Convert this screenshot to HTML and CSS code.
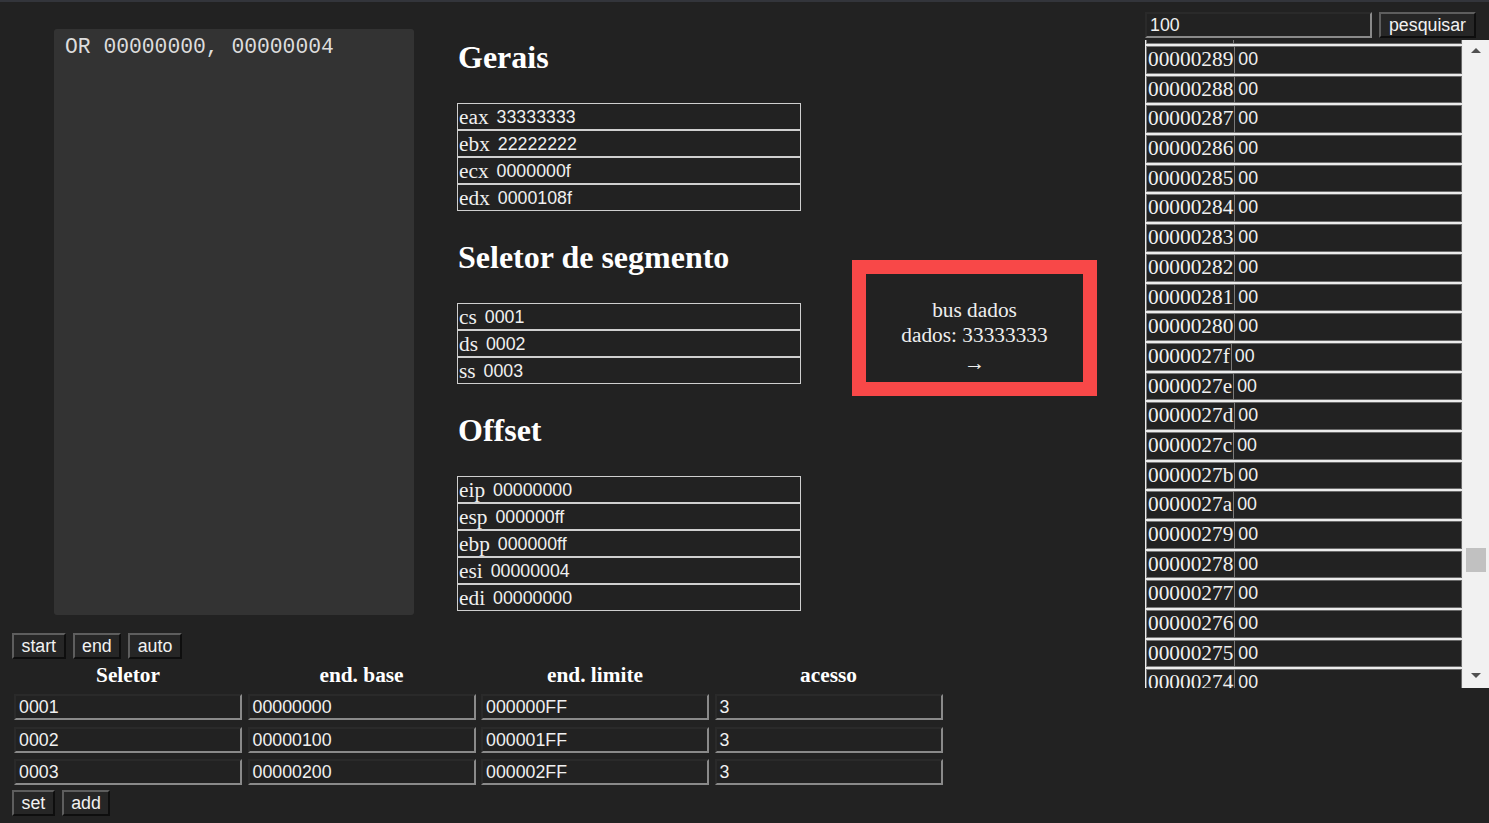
FILE: index.html
```html
<!DOCTYPE html>
<html lang="pt">
<head>
<meta charset="utf-8">
<title>Simulador</title>
<link rel="stylesheet" href="styles.css">
</head>
<body>
<div class="page">
  <div class="left">
    <div class="top">
      <div class="code">OR 00000000, 00000004</div>
      <div class="regs">
        <h2>Gerais</h2>
        <div class="regtable">
          <div class="reg"><span class="rl">eax</span><span class="rv">33333333</span></div>
          <div class="reg"><span class="rl">ebx</span><span class="rv">22222222</span></div>
          <div class="reg"><span class="rl">ecx</span><span class="rv">0000000f</span></div>
          <div class="reg"><span class="rl">edx</span><span class="rv">0000108f</span></div>
        </div>
        <h2>Seletor de segmento</h2>
        <div class="regtable">
          <div class="reg"><span class="rl">cs</span><span class="rv">0001</span></div>
          <div class="reg"><span class="rl">ds</span><span class="rv">0002</span></div>
          <div class="reg"><span class="rl">ss</span><span class="rv">0003</span></div>
        </div>
        <h2>Offset</h2>
        <div class="regtable">
          <div class="reg"><span class="rl">eip</span><span class="rv">00000000</span></div>
          <div class="reg"><span class="rl">esp</span><span class="rv">000000ff</span></div>
          <div class="reg"><span class="rl">ebp</span><span class="rv">000000ff</span></div>
          <div class="reg"><span class="rl">esi</span><span class="rv">00000004</span></div>
          <div class="reg"><span class="rl">edi</span><span class="rv">00000000</span></div>
        </div>
      </div>
      <div class="bus">
        <div>bus dados</div>
        <div>dados: 33333333</div>
        <div class="busarrow">→</div>
      </div>
    </div>
    <div class="controls">
      <div class="btnrow">
        <button class="btn">start</button>
        <button class="btn">end</button>
        <button class="btn">auto</button>
      </div>
      <div class="seg">
        <div class="th">Seletor</div>
        <div class="th">end. base</div>
        <div class="th">end. limite</div>
        <div class="th">acesso</div>
        <div class="inp">0001</div>
        <div class="inp">00000000</div>
        <div class="inp">000000FF</div>
        <div class="inp">3</div>
        <div class="inp">0002</div>
        <div class="inp">00000100</div>
        <div class="inp">000001FF</div>
        <div class="inp">3</div>
        <div class="inp">0003</div>
        <div class="inp">00000200</div>
        <div class="inp">000002FF</div>
        <div class="inp">3</div>
      </div>
      <div class="btnrow btnrow-bottom">
        <button class="btn">set</button>
        <button class="btn">add</button>
      </div>
    </div>
  </div>
  <div class="right">
    <div class="search">
      <div class="sinput">100</div>
      <button class="btn sbtn">pesquisar</button>
    </div>
    <div class="memory">
      <div class="memview">
        <div class="memlist">
          <div class="mrow"><span class="ma">0000028a</span><span class="mv">00</span></div>
          <div class="mrow"><span class="ma">00000289</span><span class="mv">00</span></div>
          <div class="mrow"><span class="ma">00000288</span><span class="mv">00</span></div>
          <div class="mrow"><span class="ma">00000287</span><span class="mv">00</span></div>
          <div class="mrow"><span class="ma">00000286</span><span class="mv">00</span></div>
          <div class="mrow"><span class="ma">00000285</span><span class="mv">00</span></div>
          <div class="mrow"><span class="ma">00000284</span><span class="mv">00</span></div>
          <div class="mrow"><span class="ma">00000283</span><span class="mv">00</span></div>
          <div class="mrow"><span class="ma">00000282</span><span class="mv">00</span></div>
          <div class="mrow"><span class="ma">00000281</span><span class="mv">00</span></div>
          <div class="mrow"><span class="ma">00000280</span><span class="mv">00</span></div>
          <div class="mrow"><span class="ma">0000027f</span><span class="mv">00</span></div>
          <div class="mrow"><span class="ma">0000027e</span><span class="mv">00</span></div>
          <div class="mrow"><span class="ma">0000027d</span><span class="mv">00</span></div>
          <div class="mrow"><span class="ma">0000027c</span><span class="mv">00</span></div>
          <div class="mrow"><span class="ma">0000027b</span><span class="mv">00</span></div>
          <div class="mrow"><span class="ma">0000027a</span><span class="mv">00</span></div>
          <div class="mrow"><span class="ma">00000279</span><span class="mv">00</span></div>
          <div class="mrow"><span class="ma">00000278</span><span class="mv">00</span></div>
          <div class="mrow"><span class="ma">00000277</span><span class="mv">00</span></div>
          <div class="mrow"><span class="ma">00000276</span><span class="mv">00</span></div>
          <div class="mrow"><span class="ma">00000275</span><span class="mv">00</span></div>
          <div class="mrow"><span class="ma">00000274</span><span class="mv">00</span></div>
          <div class="mrow"><span class="ma">00000273</span><span class="mv">00</span></div>
        </div>
      </div>
      <div class="scrollbar">
        <svg class="arrow" width="26" height="22" viewBox="0 0 26 22"><polygon points="8,13 18,13 13,8" fill="#505050"/></svg>
        <div class="track"><div class="thumb"></div></div>
        <svg class="arrow" width="26" height="22" viewBox="0 0 26 22"><polygon points="8,7 18,7 13,12" fill="#505050"/></svg>
      </div>
    </div>
  </div>
</div>
</body>
</html>
```
FILE: styles.css
```css
* { box-sizing: border-box; }
html, body {
  margin: 0;
  padding: 0;
  background: #222222;
}
body {
  width: 1489px;
  height: 823px;
  overflow: hidden;
  border-top: 2px solid #33353b;
  color: #eeeeee;
  font-family: "Liberation Serif", "Times New Roman", serif;
  font-size: 21.33px;
}
.page {
  display: flex;
  height: 821px;
}
.left {
  width: 1145px;
  display: flex;
  flex-direction: column;
}
.top {
  display: flex;
  align-items: flex-start;
}
.code {
  margin-left: 54px;
  margin-top: 27px;
  width: 360px;
  height: 586px;
  background: #333333;
  border-radius: 3px;
  padding: 6px 11px;
  font-family: "Liberation Mono", "Courier New", monospace;
  font-size: 21.33px;
  line-height: 24px;
  color: #dddddd;
  white-space: pre;
}
.regs {
  margin-left: 43px;
  width: 344px;
  padding-top: 9px;
}
.regs h2 {
  margin: 26.5px 0;
  padding-left: 1px;
  font-size: 32px;
  line-height: 39px;
  font-weight: bold;
  color: #ffffff;
}
.regtable {
  display: flex;
  flex-direction: column;
}
.reg {
  height: 27px;
  border: 1px solid #cfcfcf;
  display: flex;
  align-items: center;
  padding-left: 1px;
  line-height: 24px;
  color: #f0f0f0;
}
.rl {
  margin-right: 8px;
}
.rv {
  font-family: "Liberation Sans", Arial, sans-serif;
  font-size: 17.78px;
}
.bus {
  margin-left: 51px;
  margin-top: 258px;
  width: 245px;
  height: 136px;
  border: 14px solid #f84848;
  padding-top: 24px;
  text-align: center;
  line-height: 25px;
  color: #eeeeee;
}
.busarrow {
  margin-top: 3px;
}
.controls {
  margin-top: 18px;
  margin-left: 12px;
  display: flex;
  flex-direction: column;
}
.btnrow {
  display: flex;
  gap: 7px;
}
.btnrow-bottom {
  margin-top: 5px;
}
.btn {
  height: 26px;
  padding: 0 7.5px;
  background: #262626;
  color: #f2f2f2;
  border: 2px solid;
  border-color: #5e5e5e #0e0e0e #0e0e0e #5e5e5e;
  font-family: "Liberation Sans", Arial, sans-serif;
  font-size: 17.78px;
  line-height: 20px;
}
.seg {
  margin-top: 4px;
  margin-left: 2px;
  display: grid;
  grid-template-columns: repeat(4, 228px);
  grid-auto-rows: 26px;
  grid-template-rows: 24.5px;
  column-gap: 5.5px;
  row-gap: 6.5px;
}
.th {
  text-align: center;
  font-weight: bold;
  color: #ffffff;
  line-height: 24px;
}
.inp {
  height: 26px;
  border: 2px solid;
  border-color: #2a2a2a #8a8a8a #8a8a8a #2a2a2a;
  padding: 0 3px;
  font-family: "Liberation Sans", Arial, sans-serif;
  font-size: 17.78px;
  line-height: 22px;
  color: #f0f0f0;
}
.right {
  width: 344px;
  display: flex;
  flex-direction: column;
}
.search {
  margin-top: 10px;
  display: flex;
  gap: 7px;
}
.sinput {
  width: 227px;
  height: 26px;
  border: 2px solid;
  border-color: #2a2a2a #8a8a8a #8a8a8a #2a2a2a;
  padding: 0 3px;
  font-family: "Liberation Sans", Arial, sans-serif;
  font-size: 17.78px;
  line-height: 22px;
  color: #f0f0f0;
}
.sbtn {
  width: 97px;
}
.memory {
  margin-top: 2px;
  height: 648px;
  display: flex;
}
.memview {
  flex: 1;
  overflow: hidden;
  background: #ececec;
}
.memlist {
  margin-top: -25.7px;
}
.mrow {
  margin-top: 2px;
  margin-left: 1px;
  margin-right: 1px;
  height: 27.7px;
  display: flex;
  background: #222222;
}
.ma {
  border: 1px solid #7a7a7a;
  padding: 0 1px 0 1px;
  line-height: 25px;
  color: #f0f0f0;
}
.mv {
  flex: 1;
  border: 1px solid #6a6a6a;
  border-left: none;
  padding-left: 3px;
  font-family: "Liberation Sans", Arial, sans-serif;
  font-size: 17.78px;
  line-height: 25px;
  color: #f0f0f0;
}
.scrollbar {
  width: 26px;
  background: #f1f1f1;
  display: flex;
  flex-direction: column;
}
.arrow {
  display: block;
  flex: none;
}
.track {
  flex: 1;
  position: relative;
}
.thumb {
  position: absolute;
  left: 3px;
  right: 3px;
  top: 486px;
  height: 24px;
  background: #c1c1c1;
}
```
